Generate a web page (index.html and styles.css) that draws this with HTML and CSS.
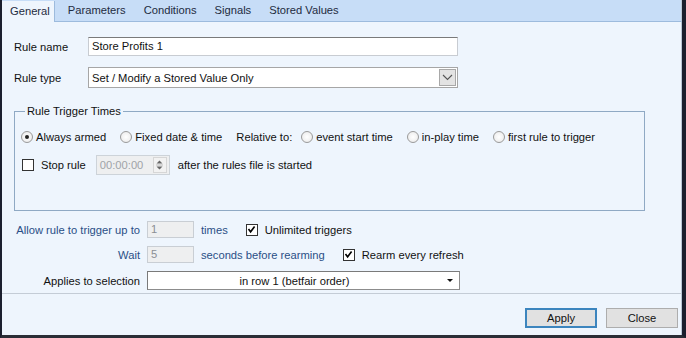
FILE: index.html
```html
<!DOCTYPE html>
<html lang="en">
<head>
  <meta charset="UTF-8" />
  <title>Rule Editor</title>
  <link rel="stylesheet" href="styles.css">
</head>
<body>

  <div id="window">
    <div class="tabs">
      <span class="tab active">General</span>
      <span class="tab">Parameters</span>
      <span class="tab">Conditions</span>
      <span class="tab">Signals</span>
      <span class="tab">Stored Values</span>
    </div>

    <div class="page">
      <div class="field-row">
        <label class="lbl">Rule name</label>
        <div class="textbox wide">Store Profits 1</div>
      </div>

      <div class="field-row type-row">
        <label class="lbl">Rule type</label>
        <div class="combo wide">
          <span>Set / Modify a Stored Value Only</span>
          <span class="combo-btn">
            <svg width="11" height="7" viewBox="0 0 11 7"><path d="M1 1 L5.5 5.5 L10 1" fill="none" stroke="#555" stroke-width="1.1"/></svg>
          </span>
        </div>
      </div>

      <fieldset class="group">
        <legend>Rule Trigger Times</legend>
        <div class="opt-row">
          <span class="radio checked"></span><span class="opt-text">Always armed</span>
          <span class="radio"></span><span class="opt-text">Fixed date &amp; time</span>
          <span class="opt-text plain">Relative to:</span>
          <span class="radio"></span><span class="opt-text">event start time</span>
          <span class="radio"></span><span class="opt-text">in-play time</span>
          <span class="radio"></span><span class="opt-text">first rule to trigger</span>
        </div>
        <div class="opt-row stop-row">
          <span class="check"></span><span class="opt-text">Stop rule</span>
          <div class="spin">
            <span>00:00:00</span>
            <span class="spin-btn">
              <svg width="7" height="12" viewBox="0 0 7 12"><path d="M0.5 4.5 L3.5 1.5 L6.5 4.5 Z M0.5 7.5 L3.5 10.5 L6.5 7.5 Z" fill="#666"/><path d="M0 6 H7" stroke="#bbb" stroke-width="1"/></svg>
            </span>
          </div>
          <span class="opt-text">after the rules file is started</span>
        </div>
      </fieldset>

      <div class="lower">
        <span class="lbl-r blue">Allow rule to trigger up to</span>
        <div class="row-items">
          <div class="textbox small disabled">1</div>
          <span class="unit">times</span>
          <span class="check on"><svg width="9" height="9" viewBox="0 0 9 9"><path d="M1.5 4 L3.6 6.8 L7.6 1.5" fill="none" stroke="#000" stroke-width="1.6"/></svg></span>
          <span class="opt-text">Unlimited triggers</span>
        </div>

        <span class="lbl-r blue">Wait</span>
        <div class="row-items">
          <div class="textbox small disabled">5</div>
          <span class="unit">seconds before rearming</span>
          <span class="check on"><svg width="9" height="9" viewBox="0 0 9 9"><path d="M1.5 4 L3.6 6.8 L7.6 1.5" fill="none" stroke="#000" stroke-width="1.6"/></svg></span>
          <span class="opt-text">Rearm every refresh</span>
        </div>

        <span class="lbl-r">Applies to selection</span>
        <div class="row-items">
          <div class="selectbox">
            <span class="sel-text">in row 1 (betfair order)</span>
            <span class="sel-arrow"></span>
          </div>
        </div>
      </div>
    </div>

    <div class="footer">
      <button class="btn default">Apply</button>
      <button class="btn">Close</button>
    </div>
  </div>

</body>
</html>
```

FILE: styles.css
```css
* {
  box-sizing: border-box;
  font-family: 'Liberation Sans', Arial, sans-serif;
}

body {
  margin: 0;
  background: #ffffff;
}

#window {
  width: 686px;
  height: 338px;
  background: #eef5fd;
  border-left: 2px solid #1b1f2e;
  border-right: 4px solid #1b1f2e;
  border-bottom: 3px solid #2a2d36;
  display: flex;
  flex-direction: column;
  font-size: 11.2px;
  color: #111;
}

.tabs {
  height: 22px;
  background: #c7ddf7;
  border-bottom: 1px solid #9dbbdd;
  border-right: 1px solid #b9c6d6;
  display: flex;
  align-items: flex-end;
}

.tab {
  padding: 0 9px 0 9px;
  height: 20px;
  line-height: 19px;
  color: #1e2b40;
}

.tab.active {
  background: #eef5fd;
  height: 21px;
  margin-bottom: -1px;
  padding: 1px 4px 0 8px;
  margin-right: 4px;
  border-right: 1px solid #9dbbdd;
}

.page {
  flex: 1;
  border-right: 1px solid #b9c6d6;
  border-bottom: 1px solid #c4ccd6;
  padding: 15px 0 0 12px;
}

.field-row {
  display: flex;
  align-items: center;
  height: 19px;
}

.type-row {
  margin-top: 11px;
  height: 21px;
}

.lbl {
  width: 74px;
}

.textbox {
  background: #fff;
  border: 1px solid #c8ccd2;
  border-top-color: #7a7a7a;
  height: 19px;
  line-height: 17px;
  padding-left: 3px;
}

.wide {
  width: 370px;
}

.combo {
  height: 21px;
  background: #fff;
  border: 1px solid #a6a6a6;
  display: flex;
  align-items: center;
  justify-content: space-between;
  padding-left: 3px;
}

.combo-btn {
  width: 17px;
  height: 17px;
  margin-right: 1px;
  background: #e3e3e3;
  border: 1px solid #a8a8a8;
  display: flex;
  align-items: center;
  justify-content: center;
}

.group {
  margin: 17px 0 0 0;
  width: 631px;
  height: 106px;
  border: 1px solid #8fa9c4;
  padding: 12px 0 0 6px;
}

.group legend {
  padding: 0 2px;
  margin-left: 4px;
}

.opt-row {
  display: flex;
  align-items: center;
  height: 16px;
}

.stop-row {
  margin-top: 10px;
  height: 20px;
}

.radio {
  width: 12px;
  height: 12px;
  border-radius: 50%;
  border: 1px solid #9a9a9a;
  background: radial-gradient(circle, #fff 0%, #e8e8e8 100%);
  position: relative;
  margin-right: 3px;
}

.radio.checked::after {
  content: "";
  position: absolute;
  left: 3px;
  top: 3px;
  width: 4px;
  height: 4px;
  border-radius: 50%;
  background: #222;
}

.opt-text {
  margin-right: 14px;
}

.opt-text.plain {
  margin-right: 9px;
}

.check {
  width: 12px;
  height: 12px;
  border: 1px solid #333;
  background: #fff;
  margin: 0 7px 0 1px;
  display: flex;
  align-items: center;
  justify-content: center;
}

.spin {
  width: 74px;
  height: 20px;
  border: 1px solid #cdd3d9;
  background: #eeeff0;
  color: #a0a4a8;
  display: flex;
  align-items: center;
  justify-content: space-between;
  padding-left: 3px;
  margin: 0 8px 0 -4px;
}

.spin-btn {
  width: 14px;
  height: 16px;
  margin-right: 2px;
  border: 1px solid #d6d6d6;
  background: #f2f2f2;
  display: flex;
  align-items: center;
  justify-content: center;
}

.lower {
  display: grid;
  grid-template-columns: 126px 1fr;
  grid-template-rows: 17px 17px 19px;
  row-gap: 8px;
  column-gap: 7px;
  margin-top: 10px;
  align-items: center;
}

.lbl-r {
  text-align: right;
  white-space: nowrap;
}

.blue {
  color: #2a4f86;
}

.row-items {
  display: flex;
  align-items: center;
  height: 100%;
}

.textbox.small {
  width: 47px;
  height: 17px;
  line-height: 15px;
}

.disabled {
  background: #eeeff0;
  color: #8a8e94;
  border-color: #c9ced4;
}

.unit {
  margin-left: 7px;
  margin-right: 17px;
  color: #2a4f86;
}

.check.on {
  margin-right: 7px;
}

.selectbox {
  width: 313px;
  height: 19px;
  background: #fff;
  border: 1px solid #7a7a7a;
  border-color: #7a7a7a #8c8c8c #8c8c8c #7a7a7a;
  display: flex;
  align-items: center;
}

.sel-text {
  flex: 1;
  text-align: center;
  padding-right: 6px;
}

.sel-arrow {
  width: 0;
  height: 0;
  border-left: 3px solid transparent;
  border-right: 3px solid transparent;
  border-top: 3px solid #111;
  margin-right: 6px;
}

.footer {
  height: 41px;
  border-right: 1px solid #b9c6d6;
  display: flex;
  justify-content: flex-end;
  align-items: flex-start;
  gap: 9px;
  padding-right: 3px;
  padding-top: 14px;
}

.btn {
  width: 72px;
  height: 20px;
  font-size: 11.2px;
  background: #e1e1e1;
  border: 1px solid #adadad;
  color: #111;
  padding: 0;
}

.btn.default {
  border: 2px solid #3c85be;
}
```
